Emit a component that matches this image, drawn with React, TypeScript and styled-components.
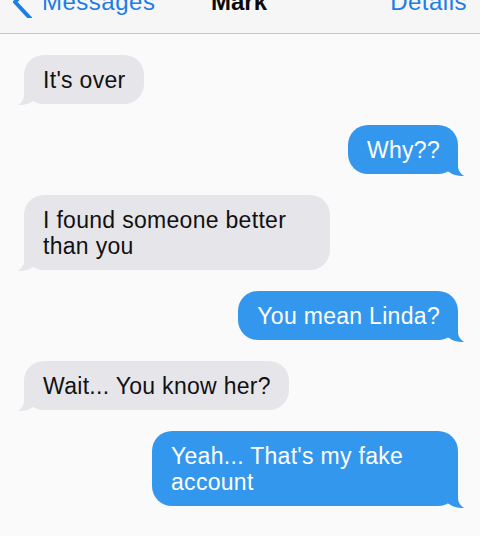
import React from "react";
import styled, { createGlobalStyle, css } from "styled-components";

const Global = createGlobalStyle`
  html, body {
    margin: 0;
    padding: 0;
    background: #fafafa;
    font-family: "Liberation Sans", Arial, Helvetica, sans-serif;
  }
  #root { min-height: 536px; }
`;

const Page = styled.div`
  width: 480px;
  height: 536px;
  overflow: hidden;
  background: #fafafa;
`;

const NavBar = styled.header`
  height: 33px;
  background: #f6f6f6;
  border-bottom: 1px solid #c6c6c6;
  overflow: hidden;
`;

const NavRow = styled.div`
  display: grid;
  grid-template-columns: 1fr auto 1fr;
  align-items: center;
  height: 30px;
  margin-top: -14px;
  padding: 0 13px 0 11px;
`;

const Back = styled.div`
  display: flex;
  align-items: center;
  gap: 10px;
  color: #1c7de6;
  font-size: 24px;
  line-height: 24px;
  letter-spacing: 0.5px;
`;

const Title = styled.div`
  font-size: 24px;
  line-height: 24px;
  font-weight: 700;
  color: #0a0a0a;
  text-align: center;
`;

const Action = styled.div`
  justify-self: end;
  color: #1c7de6;
  font-size: 24px;
  line-height: 24px;
  letter-spacing: 0.5px;
`;

const Thread = styled.main`
  display: flex;
  flex-direction: column;
  gap: 21px;
  padding: 21px 22px 0 24px;
`;

const Bubble = styled.div<{ $me?: boolean }>`
  position: relative;
  max-width: 306px;
  box-sizing: border-box;
  padding: 12px 18px 11px 19px;
  border-radius: 20px;
  font-size: 23px;
  line-height: 26px;
  letter-spacing: 0.3px;
  ${(p) =>
    p.$me
      ? css`
          align-self: flex-end;
          background: #3497ee;
          color: #ffffff;
          &::before {
            content: "";
            position: absolute;
            bottom: -2px;
            right: -7px;
            width: 22px;
            height: 22px;
            background: #3497ee;
            border-bottom-left-radius: 18px 15px;
          }
          &::after {
            content: "";
            position: absolute;
            bottom: -3px;
            right: -13px;
            width: 13px;
            height: 24px;
            background: #fafafa;
            border-bottom-left-radius: 11px;
          }
        `
      : css`
          align-self: flex-start;
          background: #e5e5ea;
          color: #111111;
          &::before {
            content: "";
            position: absolute;
            bottom: -1px;
            left: -7px;
            width: 22px;
            height: 22px;
            background: #e5e5ea;
            border-bottom-right-radius: 18px 15px;
          }
          &::after {
            content: "";
            position: absolute;
            bottom: -2px;
            left: -13px;
            width: 13px;
            height: 24px;
            background: #fafafa;
            border-bottom-right-radius: 11px;
          }
        `}
`;

const Text = styled.span`
  position: relative;
  z-index: 2;
`;

const messages: { me: boolean; text: string }[] = [
  { me: false, text: "It's over" },
  { me: true, text: "Why??" },
  { me: false, text: "I found someone better than you" },
  { me: true, text: "You mean Linda?" },
  { me: false, text: "Wait... You know her?" },
  { me: true, text: "Yeah... That's my fake account" },
];

export default function App() {
  return (
    <Page>
      <Global />
      <NavBar>
        <NavRow>
          <Back>
            <svg width="21" height="32" viewBox="0 0 21 32" fill="none">
              <path
                d="M19 0 L4 16 L19 32"
                stroke="#1c7de6"
                strokeWidth="4"
                strokeLinecap="round"
                strokeLinejoin="round"
              />
            </svg>
            <span>Messages</span>
          </Back>
          <Title>Mark</Title>
          <Action>Details</Action>
        </NavRow>
      </NavBar>
      <Thread>
        {messages.map((m, i) => (
          <Bubble key={i} $me={m.me}>
            <Text>{m.text}</Text>
          </Bubble>
        ))}
      </Thread>
    </Page>
  );
}
